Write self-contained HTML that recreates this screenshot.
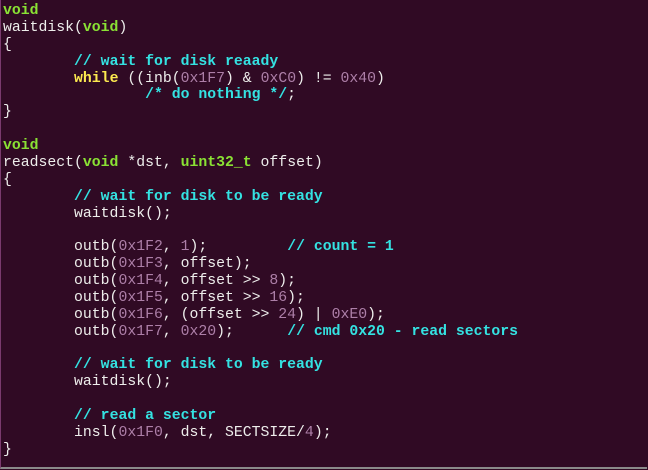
<!DOCTYPE html>
<html><head><meta charset="utf-8"><style>
html,body{margin:0;padding:0;background:#300a24;}
body{width:648px;height:470px;overflow:hidden;position:relative;}
.frame{position:absolute;left:0;top:0;width:646px;height:467px;border-left:1px solid #7a3a6e;border-bottom:2px solid #8a8a8a;}
pre{position:absolute;left:3px;top:3px;margin:0;font-family:"Liberation Mono",monospace;font-size:14.8px;line-height:16.88px;color:#eeeeec;white-space:pre;}
.k{color:#8ae234;font-weight:bold}
.w{color:#fce94f;font-weight:bold}
.n{color:#ad7fa8}
.c{color:#34e2e2;font-weight:bold}
</style></head><body><div class="frame"></div>
<pre><span class="k">void</span>
waitdisk(<span class="k">void</span>)
{
        <span class="c">// wait for disk reaady</span>
        <span class="w">while</span> ((inb(<span class="n">0x1F7</span>) &amp; <span class="n">0xC0</span>) != <span class="n">0x40</span>)
                <span class="c">/* do nothing */</span>;
}

<span class="k">void</span>
readsect(<span class="k">void</span> *dst, <span class="k">uint32_t</span> offset)
{
        <span class="c">// wait for disk to be ready</span>
        waitdisk();

        outb(<span class="n">0x1F2</span>, <span class="n">1</span>);         <span class="c">// count = 1</span>
        outb(<span class="n">0x1F3</span>, offset);
        outb(<span class="n">0x1F4</span>, offset &gt;&gt; <span class="n">8</span>);
        outb(<span class="n">0x1F5</span>, offset &gt;&gt; <span class="n">16</span>);
        outb(<span class="n">0x1F6</span>, (offset &gt;&gt; <span class="n">24</span>) | <span class="n">0xE0</span>);
        outb(<span class="n">0x1F7</span>, <span class="n">0x20</span>);      <span class="c">// cmd 0x20 - read sectors</span>

        <span class="c">// wait for disk to be ready</span>
        waitdisk();

        <span class="c">// read a sector</span>
        insl(<span class="n">0x1F0</span>, dst, SECTSIZE/<span class="n">4</span>);
}</pre>
</body></html>
